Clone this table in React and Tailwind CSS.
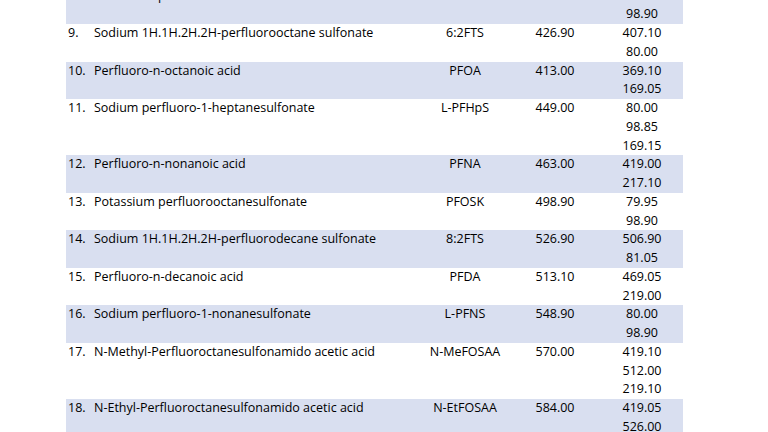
import React from 'react';

const rows = [
  { n: '8.', name: 'Potassium perfluoro-1-hexanesulfonate', abbr: 'PFHxSK', mw: '398.90', frags: ['80.00', '98.90'] },
  { n: '9.', name: 'Sodium 1H.1H.2H.2H-perfluorooctane sulfonate', abbr: '6:2FTS', mw: '426.90', frags: ['407.10', '80.00'] },
  { n: '10.', name: 'Perfluoro-n-octanoic acid', abbr: 'PFOA', mw: '413.00', frags: ['369.10', '169.05'] },
  { n: '11.', name: 'Sodium perfluoro-1-heptanesulfonate', abbr: 'L-PFHpS', mw: '449.00', frags: ['80.00', '98.85', '169.15'] },
  { n: '12.', name: 'Perfluoro-n-nonanoic acid', abbr: 'PFNA', mw: '463.00', frags: ['419.00', '217.10'] },
  { n: '13.', name: 'Potassium perfluorooctanesulfonate', abbr: 'PFOSK', mw: '498.90', frags: ['79.95', '98.90'] },
  { n: '14.', name: 'Sodium 1H.1H.2H.2H-perfluorodecane sulfonate', abbr: '8:2FTS', mw: '526.90', frags: ['506.90', '81.05'] },
  { n: '15.', name: 'Perfluoro-n-decanoic acid', abbr: 'PFDA', mw: '513.10', frags: ['469.05', '219.00'] },
  { n: '16.', name: 'Sodium perfluoro-1-nonanesulfonate', abbr: 'L-PFNS', mw: '548.90', frags: ['80.00', '98.90'] },
  { n: '17.', name: 'N-Methyl-Perfluoroctanesulfonamido acetic acid', abbr: 'N-MeFOSAA', mw: '570.00', frags: ['419.10', '512.00', '219.10'] },
  { n: '18.', name: 'N-Ethyl-Perfluoroctanesulfonamido acetic acid', abbr: 'N-EtFOSAA', mw: '584.00', frags: ['419.05', '526.00'] },
];

const App = () => {
  return (
    <div className="h-[432px] w-[768px] overflow-hidden bg-white">
      {/* table continues from previous page, first row cut at the top */}
      <div
        className="ml-[66px] -mt-[13.5px] w-[617px] text-[12.5px] leading-[18.75px] text-black"
        style={{ fontFamily: '"Open Sans", sans-serif' }}
      >
        {rows.map((row, i) => (
          <div
            key={row.n}
            className={`grid grid-cols-[28px_316px_110px_70px_93px] ${i % 2 === 0 ? 'bg-[#d9dff0]' : 'bg-white'}`}
          >
            <div className="pl-[2px]">{row.n}</div>
            <div>{row.name}</div>
            <div className="text-center">{row.abbr}</div>
            <div className="text-center">{row.mw}</div>
            <div className="pl-[11px] text-center">
              {row.frags.map((f) => (
                <div key={f}>{f}</div>
              ))}
            </div>
          </div>
        ))}
      </div>
    </div>
  );
};

export default App;
